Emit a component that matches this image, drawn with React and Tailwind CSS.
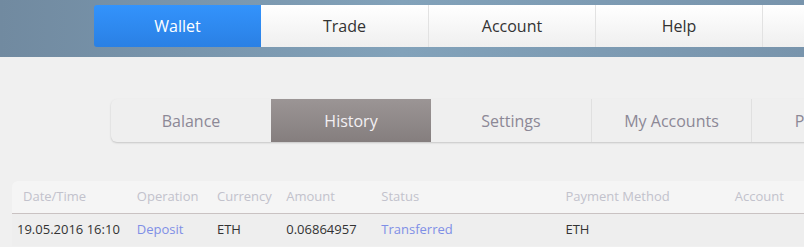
import React from "react";

const mainNav = ["Wallet", "Trade", "Account", "Help", ""];
const subNav = ["Balance", "History", "Settings", "My Accounts", "Payments"];

const columns = [
  { label: "Date/Time", w: "w-[115px]" },
  { label: "Operation", w: "w-[81px]" },
  { label: "Currency", w: "w-[70px]" },
  { label: "Amount", w: "w-[96px]" },
  { label: "Status", w: "w-[186px]" },
  { label: "Payment Method", w: "w-[171px]" },
  { label: "Account", w: "w-[70px]" },
];

const App = () => {
  return (
    <div
      className="w-[804px] h-[247px] overflow-hidden bg-[#f0f0f0]"
      style={{ fontFamily: '"Open Sans", "Liberation Sans", sans-serif' }}
    >
      {/* top bar */}
      <div className="h-[57px] bg-gradient-to-r from-[#718aa0] via-[#82a2ba] to-[#7894ac] pt-[5px] pl-[94px]">
        <div className="flex h-[42px] w-max">
          {mainNav.map((item, i) =>
            i === 0 ? (
              <div
                key={i}
                className="w-[167px] flex items-center justify-center rounded-l-[3px] bg-gradient-to-b from-[#3393fc] to-[#2a80e4] text-white text-[16px]"
              >
                {item}
              </div>
            ) : (
              <div
                key={i}
                className={`w-[167px] flex items-center justify-center bg-gradient-to-b from-white to-[#efefef] text-[#333] text-[16px] ${
                  i > 1 ? "border-l border-[#e2e2e2]" : ""
                }`}
              >
                {item}
              </div>
            )
          )}
        </div>
      </div>

      {/* sub tabs */}
      <div className="pt-[42px] pl-[111px]">
        <div className="flex h-[43px] w-max rounded-l-[6px] bg-[#efefef] shadow-[0_1px_2px_rgba(0,0,0,0.18)]">
          {subNav.map((item, i) =>
            i === 1 ? (
              <div
                key={i}
                className="w-[160px] flex items-center justify-center bg-gradient-to-b from-[#9b9595] to-[#857e7e] text-[#f3f0f3] text-[16px]"
              >
                {item}
              </div>
            ) : (
              <div
                key={i}
                className={`w-[160px] flex items-center justify-center text-[#8c8896] text-[16px] ${
                  i > 2 ? "border-l border-[#e0e0e0]" : ""
                }`}
              >
                {item}
              </div>
            )
          )}
        </div>
      </div>

      {/* history table */}
      <div className="mt-[39px] ml-[12px] rounded-tl-[6px] bg-[#f5f5f5]">
        <div className="flex h-[33px] items-center pl-[11px] border-b border-[#c9c2c2] text-[13px] text-[#c2c2cc] whitespace-nowrap">
          {columns.map((c) => (
            <div key={c.label} className={c.w}>
              {c.label}
            </div>
          ))}
        </div>
        <div className="flex h-[32px] items-center pl-[5px] bg-[#eeeeee] text-[13px] text-[#333] whitespace-nowrap">
          <div className="w-[121px]">19.05.2016 16:10</div>
          <div className="w-[81px] text-[#7f8fe6]">Deposit</div>
          <div className="w-[70px]">ETH</div>
          <div className="w-[96px]">0.06864957</div>
          <div className="w-[186px] text-[#7f8fe6]">Transferred</div>
          <div className="w-[171px]">ETH</div>
          <div className="w-[70px]"></div>
        </div>
      </div>
    </div>
  );
};

export default App;
